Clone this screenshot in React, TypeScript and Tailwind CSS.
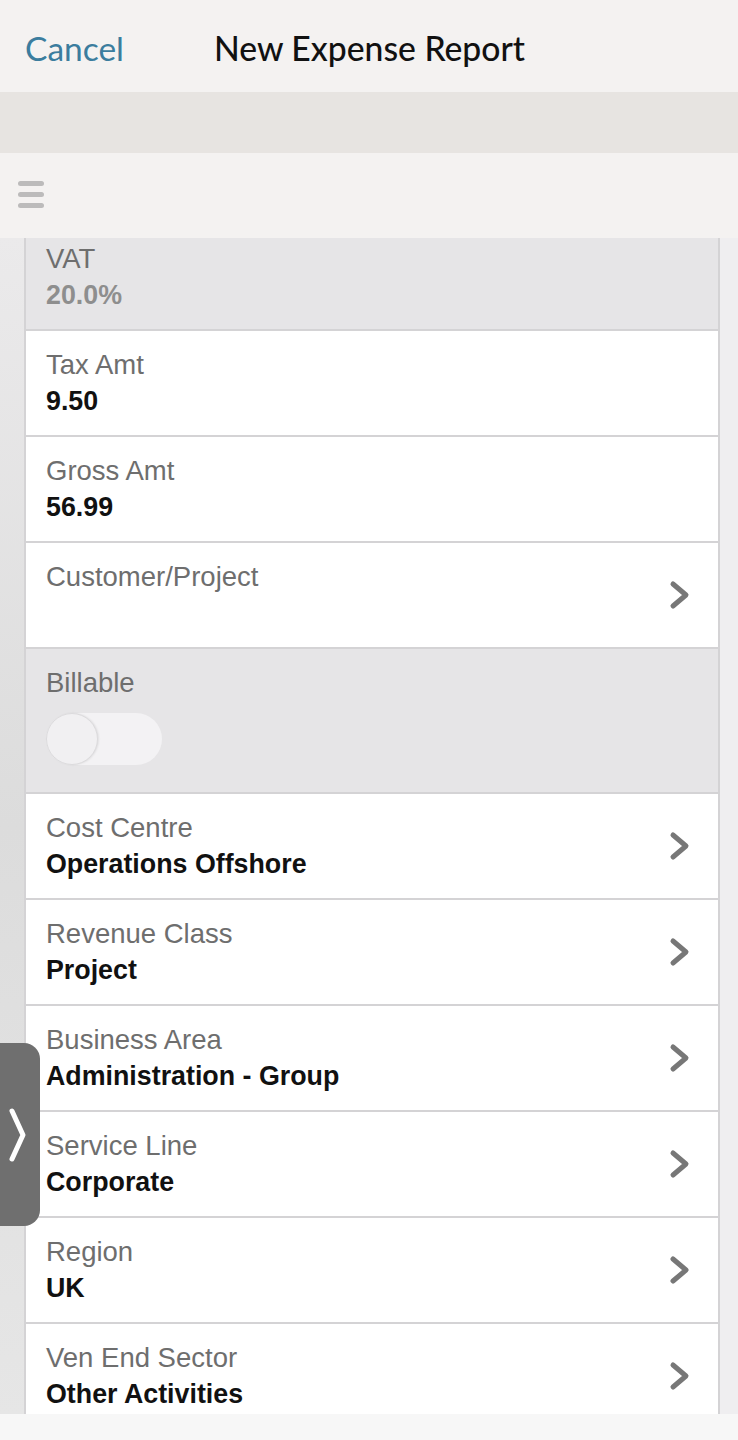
type Row = {
  label: string;
  value?: string;
  chevron?: boolean;
};

const rows: Row[] = [
  { label: "Tax Amt", value: "9.50" },
  { label: "Gross Amt", value: "56.99" },
  { label: "Customer/Project", chevron: true },
];

const rows2: Row[] = [
  { label: "Cost Centre", value: "Operations Offshore", chevron: true },
  { label: "Revenue Class", value: "Project", chevron: true },
  { label: "Business Area", value: "Administration - Group", chevron: true },
  { label: "Service Line", value: "Corporate", chevron: true },
  { label: "Region", value: "UK", chevron: true },
  { label: "Ven End Sector", value: "Other Activities", chevron: true },
];

function Chevron() {
  return (
    <svg width="24" height="30" viewBox="0 0 24 30" className="shrink-0">
      <path d="M5 4 L18 15 L5 26" fill="none" stroke="#777777" strokeWidth="5" strokeLinecap="round" strokeLinejoin="round" />
    </svg>
  );
}

function FieldRow({ row }: { row: Row }) {
  return (
    <div className="h-[106px] shrink-0 bg-white border-b-2 border-[#d4d3d5] flex items-center pl-[20px] pr-[26px]">
      <div className="flex-1 self-start pt-[16px] leading-[36px]">
        <div className="text-[27.5px] text-[#6e6e6e]">{row.label}</div>
        {row.value && <div className="text-[26.8px] font-bold text-[#111111]">{row.value}</div>}
      </div>
      {row.chevron && <Chevron />}
    </div>
  );
}

export default function App() {
  return (
    <div className="w-[738px] h-[1440px] overflow-hidden bg-[#f7f7f7] flex flex-col" style={{ fontFamily: '"Liberation Sans", Arial, sans-serif' }}>
      <div className="h-[92px] shrink-0 bg-[#f4f2f1] flex items-center pt-[4px]" style={{ fontFamily: 'Lato, "Open Sans", sans-serif' }}>
        <span className="ml-[25px] text-[33.5px] text-[#3b7d9e]">Cancel</span>
        <span className="ml-[90px] text-[33.7px] font-medium text-[#111111]">New Expense Report</span>
      </div>
      <div className="h-[61px] shrink-0 bg-[#e7e4e1]" />
      <div className="h-[85px] shrink-0 bg-[#f4f2f1] flex items-center pl-[18px]">
        <div className="flex flex-col gap-[6px] -mt-[2px]">
          <div className="w-[26px] h-[5px] rounded-full bg-[#bcbbbb]" />
          <div className="w-[26px] h-[5px] rounded-full bg-[#bcbbbb]" />
          <div className="w-[26px] h-[5px] rounded-full bg-[#bcbbbb]" />
        </div>
      </div>

      <div className="relative h-[1176px] shrink-0 flex bg-[#efeef0]">
        <div className="w-[24px] shrink-0 bg-gradient-to-b from-[#ebeaeb] via-[#dcdcdc] to-[#e6e6e6]" />
        <div className="w-[696px] shrink-0 flex flex-col overflow-hidden border-l-2 border-r-2 border-[#d4d3d5]">
          <div className="h-[93px] shrink-0 bg-[#e6e5e7] border-b-2 border-[#d4d3d5] pl-[20px] pt-[3px] leading-[36px]">
            <div className="text-[27.5px] text-[#6e6e6e]">VAT</div>
            <div className="text-[26.8px] font-bold text-[#8e8e8e]">20.0%</div>
          </div>
          {rows.map((r) => (
            <FieldRow key={r.label} row={r} />
          ))}
          <div className="h-[145px] shrink-0 bg-[#e6e5e7] border-b-2 border-[#d4d3d5] pl-[20px] pt-[16px]">
            <div className="text-[27.5px] leading-[36px] text-[#6e6e6e]">Billable</div>
            <div className="mt-[12px] relative w-[116px] h-[52px] rounded-full bg-[#f3f2f4]">
              <div className="absolute left-0 top-0 w-[52px] h-[52px] rounded-full bg-[#f1f0f2] border border-[#dcdbdd] shadow-[1px_0_2px_rgba(0,0,0,0.08)]" />
            </div>
          </div>
          {rows2.map((r) => (
            <FieldRow key={r.label} row={r} />
          ))}
        </div>
        <div className="w-[18px] shrink-0 bg-[#efeef0]" />

        <div className="absolute left-0 top-[805px] w-[40px] h-[183px] rounded-r-[16px] bg-[#6f6f6f] flex items-center pl-[7px]">
          <svg width="22" height="58" viewBox="0 0 22 58">
            <path d="M5 5 L16 29 L5 53" fill="none" stroke="#ffffff" strokeWidth="5" strokeLinecap="round" strokeLinejoin="round" />
          </svg>
        </div>
      </div>
    </div>
  );
}
